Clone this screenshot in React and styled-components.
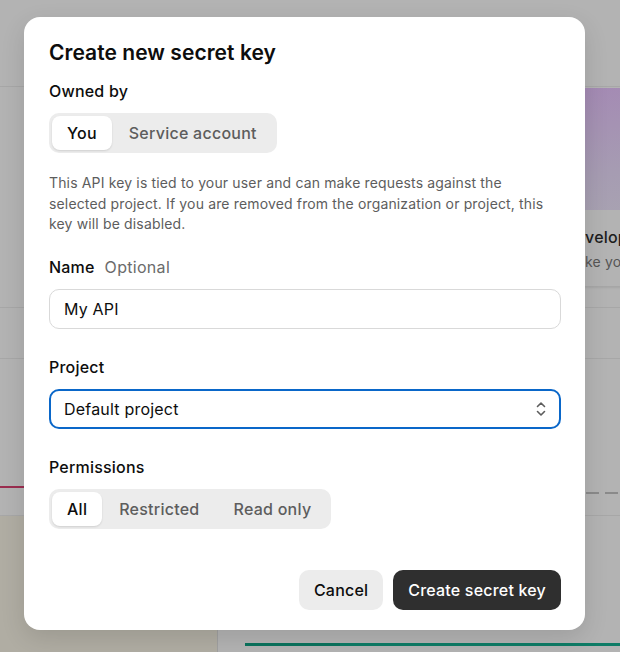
import React from "react";
import styled, { createGlobalStyle } from "styled-components";

const Global = createGlobalStyle`
  html, body { margin: 0; padding: 0; }
  body {
    background: #b3b3b3;
    font-family: Inter, "Noto Sans", sans-serif;
    -webkit-font-smoothing: antialiased;
    overflow: hidden;
  }
  * { box-sizing: border-box; }
`;

/* ---------- dimmed page behind ---------- */
const Page = styled.div`
  width: 620px;
  height: 652px;
  display: grid;
  grid-template-rows: 87px 221px 51px 157px 1fr;
  overflow: hidden;
  background: #b3b3b3;
`;

const Band = styled.div`
  border-bottom: 1px solid ${(p) => p.$line || "#a7a7a7"};
  display: flex;
  position: relative;
  overflow: hidden;
`;

const CardArea = styled.div`
  display: flex;
  padding: 1px 0 0 548px;
  width: 100%;
  overflow: hidden;
`;

const BgCard = styled.div`
  flex: 0 0 220px;
  height: 198px;
  border-radius: 10px;
  overflow: hidden;
  display: flex;
  flex-direction: column;
  box-shadow: 0 2px 2px rgba(0, 0, 0, 0.08);
`;

const BgCardArt = styled.div`
  height: 122px;
  background: linear-gradient(170deg, #a489b4 0%, #a69cb2 60%, #a9a5b1 100%);
`;

const BgCardBody = styled.div`
  flex: 1;
  background: #b3b3b3;
  padding: 13px 16px 0;
  display: flex;
  flex-direction: column;
  gap: 6px;
  white-space: nowrap;
`;

const BgTitle = styled.div`
  font-size: 16px;
  font-weight: 500;
  color: #1d1d1d;
  padding-top: 4px;
  letter-spacing: 0.2px;
`;

const BgSub = styled.div`
  font-size: 14px;
  color: #555;
  letter-spacing: 0.2px;
`;

const ChartBand = styled(Band)`
  flex-direction: column;
  justify-content: flex-end;
`;

const ChartLines = styled.div`
  display: flex;
  justify-content: space-between;
  align-items: flex-end;
  padding-bottom: 21px;
`;

const RedLine = styled.div`
  width: 40px;
  height: 2px;
  background: #9b2d4f;
  margin-bottom: 6px;
`;

const DashLine = styled.div`
  width: 34px;
  height: 2px;
  background: repeating-linear-gradient(90deg, #8a8a8a 0 13px, transparent 13px 19px);
`;

const Bottom = styled.div`
  display: grid;
  grid-template-columns: 218px 1fr;
`;

const LeftPanel = styled.div`
  background: #b0ada3;
  border-right: 1px solid #a0a0a0;
`;

const RightPanel = styled.div`
  display: flex;
  flex-direction: column;
  justify-content: flex-end;
  padding: 0 0 6px 27px;
`;

const Progress = styled.div`
  height: 3px;
  background: #0e7c66;
  display: flex;
`;

const ProgressFill = styled.div`
  width: 95px;
  background: #0a735d;
  height: 3px;
`;

/* ---------- modal ---------- */
const Dialog = styled.div`
  position: absolute;
  left: 24px;
  top: 17px;
  width: 561px;
  height: 613px;
  background: #fff;
  border-radius: 16px;
  box-shadow: 0 8px 24px rgba(0, 0, 0, 0.12);
  padding: 22px 24px 20px 25px;
  display: flex;
  flex-direction: column;
  color: #0d0d0d;
`;

const Title = styled.h2`
  margin: 0;
  font-size: 21px;
  font-weight: 600;
  line-height: 28px;
  letter-spacing: 0.05px;
  color: #0d0d0d;
`;

const Label = styled.div`
  font-size: 16px;
  font-weight: 500;
  line-height: 24px;
  letter-spacing: 0.2px;
  color: #0d0d0d;
  margin-top: ${(p) => p.$mt || 0}px;
  display: flex;
  gap: 10px;
`;

const Optional = styled.span`
  font-weight: 400;
  color: #6b6b6b;
  letter-spacing: 0.3px;
`;

const Segmented = styled.div`
  display: inline-flex;
  align-self: flex-start;
  background: #ececec;
  border-radius: 10px;
  padding: 3px;
  margin-top: ${(p) => p.$mt || 0}px;
  height: 40px;
`;

const Seg = styled.div`
  height: 34px;
  padding: 0 ${(p) => p.$px || 15}px;
  display: flex;
  align-items: center;
  border-radius: 8px;
  font-size: 16px;
  font-weight: 500;
  letter-spacing: 0.25px;
  color: ${(p) => (p.$active ? "#0d0d0d" : "#5d5d5d")};
  background: ${(p) => (p.$active ? "#fff" : "transparent")};
  box-shadow: ${(p) => (p.$active ? "0 1px 2px rgba(0,0,0,0.12)" : "none")};
`;

const Help = styled.p`
  margin: 20px 0 0;
  font-size: 14px;
  line-height: 20.5px;
  letter-spacing: 0.15px;
  color: #5d5d5d;
  width: 505px;
`;

const Field = styled.div`
  margin-top: ${(p) => p.$mt || 0}px;
  height: 40px;
  border-radius: 10px;
  border: ${(p) => (p.$focus ? "2px solid #0a67c9" : "1px solid #d9d9d9")};
  display: flex;
  align-items: center;
  justify-content: space-between;
  padding: 0 ${(p) => (p.$focus ? 12 : 15)}px 0 ${(p) => (p.$focus ? 13 : 14)}px;
  font-size: 16px;
  letter-spacing: 0.2px;
  color: #0d0d0d;
`;

const Footer = styled.div`
  margin-top: auto;
  display: flex;
  justify-content: flex-end;
  gap: 10px;
`;

const Button = styled.button`
  height: 40px;
  border: none;
  border-radius: 10px;
  padding: 0 15px;
  font-family: inherit;
  font-size: 16px;
  font-weight: 500;
  letter-spacing: 0.2px;
  background: ${(p) => (p.$primary ? "#2f2f2f" : "#ececec")};
  color: ${(p) => (p.$primary ? "#fff" : "#0d0d0d")};
`;

const Chevrons = () => (
  <svg width="12" height="18" viewBox="0 0 12 18" fill="none">
    <path d="M2.5 6.5 L6 3 L9.5 6.5" stroke="#5d5d5d" strokeWidth="1.6" strokeLinecap="round" strokeLinejoin="round" />
    <path d="M2.5 11.5 L6 15 L9.5 11.5" stroke="#5d5d5d" strokeWidth="1.6" strokeLinecap="round" strokeLinejoin="round" />
  </svg>
);

export default function App() {
  return (
    <>
      <Global />
      <Page>
        <Band />
        <Band>
          <CardArea>
            <BgCard>
              <BgCardArt />
              <BgCardBody>
                <BgTitle>Developer quickstart</BgTitle>
                <BgSub>Make your first API request</BgSub>
              </BgCardBody>
            </BgCard>
          </CardArea>
        </Band>
        <Band />
        <ChartBand>
          <ChartLines>
            <RedLine />
            <DashLine />
          </ChartLines>
        </ChartBand>
        <Bottom>
          <LeftPanel />
          <RightPanel>
            <Progress>
              <ProgressFill />
            </Progress>
          </RightPanel>
        </Bottom>
      </Page>

      <Dialog role="dialog">
        <Title>Create new secret key</Title>
        <Label $mt={12}>Owned by</Label>
        <Segmented $mt={10}>
          <Seg $active $px={15}>You</Seg>
          <Seg $px={17}>Service account</Seg>
        </Segmented>
        <Help>
          This API key is tied to your user and can make requests against the
          selected project. If you are removed from the organization or project, this
          key will be disabled.
        </Help>
        <Label $mt={20}>
          Name <Optional>Optional</Optional>
        </Label>
        <Field $mt={10}>My API</Field>
        <Label $mt={26}>Project</Label>
        <Field $mt={10} $focus>
          Default project
          <Chevrons />
        </Field>
        <Label $mt={26}>Permissions</Label>
        <Segmented $mt={10}>
          <Seg $active $px={15}>All</Seg>
          <Seg $px={17}>Restricted</Seg>
          <Seg $px={17}>Read only</Seg>
        </Segmented>
        <Footer>
          <Button>Cancel</Button>
          <Button $primary>Create secret key</Button>
        </Footer>
      </Dialog>
    </>
  );
}
